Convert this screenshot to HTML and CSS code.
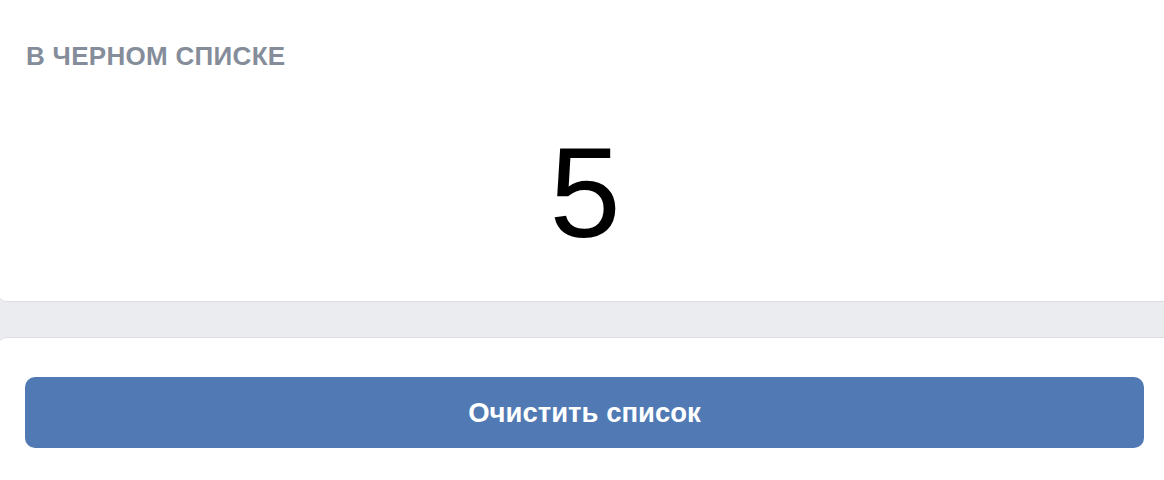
FILE: index.html
```html
<!DOCTYPE html>
<html lang="ru">
<head>
<meta charset="utf-8">
<link rel="stylesheet" href="styles.css">
</head>
<body>
<div class="page">
  <section class="card card-top">
    <h2 class="header">В ЧЕРНОМ СПИСКЕ</h2>
    <div class="count">5</div>
  </section>
  <section class="card card-bottom">
    <button class="btn">Очистить список</button>
  </section>
</div>
</body>
</html>
```
FILE: styles.css
```css
html, body {
  margin: 0;
  padding: 0;
}
body {
  background: #ebecef;
  width: 1164px;
  height: 480px;
  overflow: hidden;
  font-family: "Liberation Sans", Arial, sans-serif;
}
.page {
  display: flex;
  flex-direction: column;
  margin: 0 -10px 0 -2px;
}
.card {
  background: #ffffff;
}
.card-top {
  height: 261px;
  border-bottom: 1px solid #dcdde1;
  border-radius: 0 0 9px 9px;
  padding: 40px 30px 0 28px;
}
.header {
  margin: 0;
  font-size: 26px;
  line-height: 32px;
  font-weight: bold;
  color: #858d9a;
  letter-spacing: 0.3px;
}
.count {
  margin-top: 56px;
  text-align: center;
  font-family: "Liberation Sans", Arial, sans-serif;
  font-weight: normal;
  font-size: 128px;
  line-height: 130px;
  color: #000;
}
.card-bottom {
  margin-top: 35px;
  border-top: 1px solid #dcdde1;
  border-radius: 9px 9px 0 0;
  padding: 39px 30px 32px 27px;
}
.btn {
  display: block;
  width: 100%;
  height: 71px;
  border: 0;
  border-radius: 10px;
  background: #517ab4;
  color: #ffffff;
  font-family: "Liberation Sans", Arial, sans-serif;
  font-weight: bold;
  font-size: 27.5px;
  padding: 0;
}
```
